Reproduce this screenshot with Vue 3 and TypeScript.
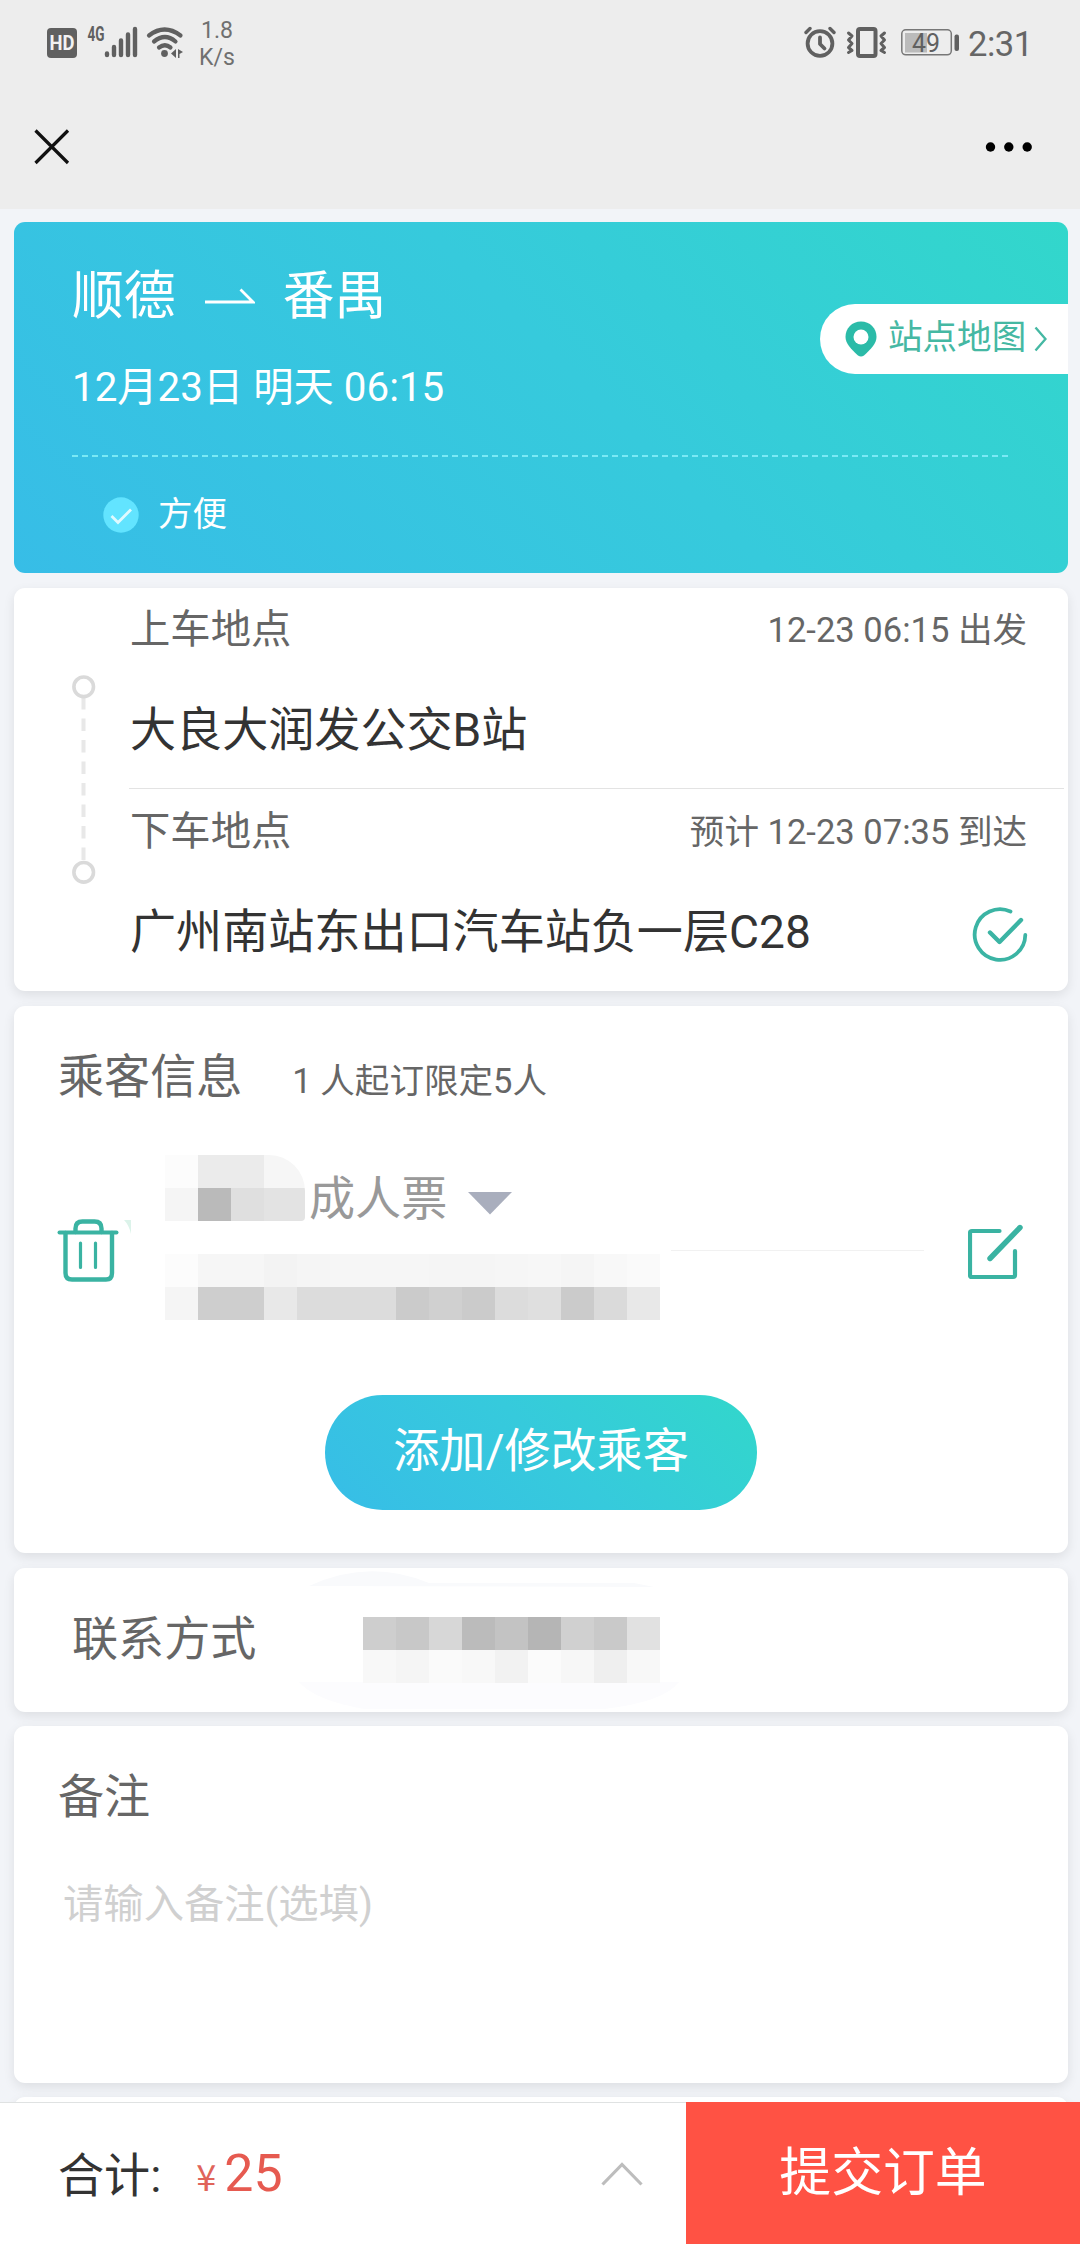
<script setup lang="ts">
interface Stop {
  label: string
  time: string
  name: string
  confirmed: boolean
}

const stops: Stop[] = [
  { label: '上车地点', time: '12-23 06:15 出发', name: '大良大润发公交B站', confirmed: false },
  { label: '下车地点', time: '预计 12-23 07:35 到达', name: '广州南站东出口汽车站负一层C28', confirmed: true },
]

const toCells = (row: string): string[] => row.split(' ').map((c) => '#' + c + c + c)

const nameMask: string[] = toCells('fc eb eb f6 f5 ba df e3')
const idMask: string[] = toCells(
  'fc f6 f6 f3 f5 f6 f6 f6 f5 f5 f6 f7 f5 f8 fa f5 ce ce e8 dc dc dc cb d0 cb dc df cb da e8',
)
const phoneMask: string[] = toCells('ce c8 d7 bb c3 b5 d0 c9 e1 f8 f5 fa f8 f2 fb f7 ef f8')
</script>

<template>
  <div class="screen">
    <header class="top">
      <div class="status">
        <svg class="net" width="140" height="60" viewBox="45 12 140 60">
          <rect x="47" y="28" width="30" height="30" rx="4" fill="#606060" />
          <text x="62" y="50" class="hd" text-anchor="middle" textLength="25" lengthAdjust="spacingAndGlyphs">HD</text>
          <text x="87.500" y="41" class="gen" textLength="17" lengthAdjust="spacingAndGlyphs">4G</text>
          <g stroke="#606060" stroke-width="4.400" stroke-linecap="round">
            <path d="M107 53.500v1.500M114 47v8M121 40.500v14.500M128 34.500v20.500M135 29v26" />
          </g>
          <g fill="none" stroke="#606060" stroke-width="4.200" stroke-linecap="round">
            <path d="M149 35.500q15.500-12 31.500 0M154 41.500q11-9 21.500 0M159 47.500q6-4.500 11.500 0" />
          </g>
          <circle cx="164.500" cy="53.500" r="3.400" fill="#606060" />
          <path d="M176 49v9l-5-4.500zM178 49v9h1.500v-4l3.500-2z" fill="#606060" />
        </svg>
        <div class="speed"><span>1.8</span><span>K/s</span></div>
        <div class="spring"></div>
        <svg width="156" height="60" viewBox="804 12 156 60">
          <g fill="none" stroke="#606060" stroke-linecap="round" stroke-linejoin="round">
            <circle cx="820" cy="43.500" r="12.400" stroke-width="3.800" />
            <path d="M820 37.500v6.500l4.500 4.500" stroke-width="3.800" />
            <path d="M806 32.500l4-4M834 32.500l-4-4" stroke-width="3.400" />
            <rect x="858" y="29" width="17.500" height="27" rx="2" stroke-width="4" />
            <path d="M848.500 33l3.500 3-3.500 4 3.500 3.500-3.500 4 3.500 3-3.500 2M884.500 33l-3.500 3 3.500 4-3.500 3.500 3.500 4-3.500 3 3.500 2" stroke-width="3" />
            <rect x="901.800" y="29.800" width="49.500" height="25" rx="4" stroke="#777" stroke-width="1.500" />
          </g>
          <rect x="905" y="33" width="22" height="19.500" fill="#bbb" />
          <rect x="954.500" y="34.500" width="4.500" height="16.500" rx="2" fill="#606060" />
          <text x="926" y="51.500" class="level" text-anchor="middle" textLength="28" lengthAdjust="spacingAndGlyphs">49</text>
        </svg>
        <span class="clock">2:31</span>
      </div>
      <div class="nav">
        <svg width="36" height="36" viewBox="0 0 36 36"><path d="M1.500 1.500l32.500 32.500M34 1.500l-32.500 32.500" stroke="#111" stroke-width="3.200" /></svg>
        <svg width="48" height="12" viewBox="0 0 48 12">
          <circle cx="5.500" cy="6" r="4.700" /><circle cx="23.800" cy="6" r="4.700" /><circle cx="42.200" cy="6" r="4.700" />
        </svg>
      </div>
    </header>

    <main class="cards">
      <section class="trip">
        <div class="route">
          <span>顺德</span>
          <svg width="50" height="18" viewBox="0 0 50 18"><path d="M0 14h48L35.500 1.500" fill="none" stroke="#fff" stroke-width="2.800" /></svg>
          <span>番禺</span>
        </div>
        <div class="date">12月23日 明天 06:15</div>
        <div class="rule"></div>
        <div class="tag">
          <svg width="36" height="36" viewBox="0 0 36 36">
            <circle cx="18" cy="18" r="17.700" fill="#62e4ff" />
            <path d="M8.500 19l6.500 6.500L28 12.500" fill="none" stroke="#dffaff" stroke-width="2.800" />
          </svg>
          <span>方便</span>
        </div>
        <div class="map">
          <svg width="32" height="36" viewBox="0 0 32 36">
            <path d="M16 0.500C7 0.500 0.500 7 0.500 16c0 6 5 11.500 12.500 18.500q3 2.200 6 0C26.500 27.500 31.500 22 31.500 16 31.500 7 25 0.500 16 0.500z" fill="#2bbba8" />
            <circle cx="16" cy="16" r="7.500" fill="#fff" />
          </svg>
          <span>站点地图</span>
          <svg width="13" height="26" viewBox="0 0 13 26"><path d="M1.500 1.500L11.500 13 1.500 24.500" fill="none" stroke="#45b8a3" stroke-width="2.400" /></svg>
        </div>
      </section>

      <section class="card stops">
        <svg class="rail" width="24" height="210" viewBox="0 0 24 210">
          <path d="M11.500 22v165" stroke="#e8e8e8" stroke-width="4" stroke-dasharray="12.500 9" />
          <circle cx="11.700" cy="11.800" r="9.800" fill="#fff" stroke="#dadada" stroke-width="3.600" />
          <circle cx="11.700" cy="197.300" r="9.800" fill="#fff" stroke="#dadada" stroke-width="3.600" />
        </svg>
        <div class="list">
          <div v-for="stop in stops" :key="stop.label" class="stop">
            <div class="head"><span class="label">{{ stop.label }}</span><span class="time">{{ stop.time }}</span></div>
            <div class="place">
              <span>{{ stop.name }}</span>
              <svg v-if="stop.confirmed" width="56" height="56" viewBox="0 0 56 56">
                <g fill="none" stroke="#3bb4a4" stroke-linecap="round" stroke-linejoin="round">
                  <path d="M38.500 4.500A25.300 25.300 0 1 0 53.300 28" stroke-width="3.800" />
                  <path d="M18 25.500l9.500 9.500L49 13" stroke-width="4.400" />
                </g>
              </svg>
            </div>
          </div>
        </div>
      </section>

      <section class="card passengers">
        <div class="title"><h2>乘客信息</h2><span>1 人起订限定5人</span></div>
        <div class="person">
          <svg class="trash" width="76" height="64" viewBox="0 0 76 64">
            <g fill="none" stroke="#3ab3a2" stroke-linecap="round">
              <path d="M2.500 13.500h57" stroke-width="4" />
              <path d="M18.500 13V9.500q0-7 7-7h12q7 0 7 7V13M8.500 14v40q0 6.500 6.500 6.500h34q6 0 6-6.500V14" stroke-width="4.400" />
              <path d="M23.500 24v24.500M38.500 24v24.500" stroke-width="3.200" />
            </g>
            <path d="M67 1h7v14q-2-9-7-14z" fill="#dcf3ea" />
          </svg>
          <div class="detail">
            <div class="fare">
              <div class="mask name"><i v-for="(c, n) in nameMask" :key="n" :style="{ background: c }"></i></div>
              <span>成人票</span>
              <svg width="44" height="23" viewBox="0 0 44 23"><path d="M0 0h44L22 22.500z" fill="#a9aebd" /></svg>
            </div>
            <div class="line"></div>
            <div class="mask id"><i v-for="(c, n) in idMask" :key="n" :style="{ background: c }"></i></div>
          </div>
          <svg class="edit" width="56" height="56" viewBox="0 0 56 56">
            <g fill="none" stroke="#3ab3a2" stroke-linecap="round" stroke-linejoin="round">
              <path d="M31.500 7H4q-2 0-2 2v42q0 2 2 2h41q2 0 2-2V27" stroke-width="4.200" />
              <path d="M22 34.500L52 3.500" stroke-width="5.400" />
            </g>
          </svg>
        </div>
        <button class="add">添加/修改乘客</button>
      </section>

      <section class="card contact">
        <svg class="haze" width="400" height="140" viewBox="0 0 400 140">
          <path d="M15 16Q75-12 135 13H340l20 4z" fill="#f9fafc" />
          <path d="M5 112h380q-15 20-75 27H70Q20 130 5 112z" fill="#fcfcfe" />
        </svg>
        <h2>联系方式</h2>
        <div class="mask phone"><i v-for="(c, n) in phoneMask" :key="n" :style="{ background: c }"></i></div>
      </section>

      <section class="card remark">
        <h2>备注</h2>
        <div class="hint">请输入备注(选填)</div>
      </section>
      <section class="card next"></section>
    </main>

    <footer class="bar">
      <div class="total">
        <span class="sum">合计:</span><span class="yen">¥</span><span class="price">25</span>
        <svg width="42" height="24" viewBox="0 0 42 24"><path d="M1.500 22.500L21 2.500l19.500 20" fill="none" stroke="#bdbdbd" stroke-width="3.200" /></svg>
      </div>
      <button class="submit">提交订单</button>
    </footer>
  </div>
</template>

<style>
body { margin: 0; }
</style>

<style scoped>
* { box-sizing: border-box; }
.screen {
  width: 1080px;
  height: 2244px;
  display: flex;
  flex-direction: column;
  overflow: hidden;
  background: #f2f4f8;
  font-family: Roboto, "Noto Sans CJK SC", sans-serif;
  color: #666;
}
svg { display: block; flex: none; }
span, h2 { white-space: nowrap; }
h2 { margin: 0; font-size: 46.08px; font-weight: 400; line-height: 60px; }
button { border: 0; padding: 0; font-family: inherit; color: #fff; }
.top { height: 209px; flex: none; background: #ededed; }
.status { height: 84px; display: flex; align-items: center; padding: 0 48px 0 45px; }
.hd { font: 700 20px Roboto, sans-serif; fill: #f2f2f2; }
.gen { font: 700 20px Roboto, sans-serif; fill: #606060; }
.level { font: 400 25px Roboto, sans-serif; fill: #606060; }
.speed { margin-left: 14px; width: 36px; display: flex; flex-direction: column; align-items: center; font-size: 23px; line-height: 27px; color: #707070; padding-top: 4px; }
.spring { flex: 1; }
.clock { margin-left: 8px; width: 64px; font-size: 34.56px; letter-spacing: -0.5px; line-height: 40px; padding-top: 3px; }
.nav { height: 125px; display: flex; justify-content: space-between; align-items: flex-start; padding: 45px 47px 0 34px; }
.nav svg:last-child { margin-top: 12px; }

.cards { flex: 1; min-height: 0; padding: 13px 12px 0 14px; display: flex; flex-direction: column; overflow: hidden; }
.card { flex: none; background: #fff; border-radius: 11px; box-shadow: 0 4px 12px rgba(0, 0, 0, 0.09); }
.trip { flex: none; position: relative; height: 351px; margin-bottom: 15px; padding: 45px 56px 0 58px; border-radius: 11px; color: #fff; background: linear-gradient(45deg, #37bde7, #36cadc 54%, #32d7cb); }
.route { display: flex; align-items: center; height: 60px; font-size: 51.84px; line-height: 60px; }
.route svg { margin: -1px 28px 0 29px; }
.date { margin-top: 34px; height: 54px; font-size: 40.32px; line-height: 54px; }
.rule { margin-top: 40px; height: 2px; background: repeating-linear-gradient(90deg, #7ae9f5 0 6px, transparent 6px 10px); }
.tag { display: flex; align-items: center; margin: 33px 0 0 31px; height: 50px; font-size: 34.56px; }
.tag span { margin: -3px 0 0 19px; line-height: 50px; }
.map { position: absolute; right: 0; top: 82px; width: 248px; height: 70px; padding-left: 25px; display: flex; align-items: center; background: #fff; border-radius: 35px 0 0 35px; color: #45b8a3; font-size: 34.56px; }
.map span { margin: -4px 8px 0 11px; line-height: 50px; }

.stops { height: 403px; margin-bottom: 15px; display: flex; }
.rail { margin: 87px 33px 0 58px; }
.list { flex: 1; }
.stop { padding-right: 41px; }
.stop:first-child { background: linear-gradient(#e3e3e3, #e3e3e3) 0 200px / 935px 1px no-repeat; }
.head { height: 82px; display: flex; align-items: center; justify-content: space-between; }
.label { font-size: 40.32px; margin: -7px 0 0 1px; }
.time { font-size: 34.56px; margin-top: -4px; }
.place { height: 120px; display: flex; align-items: center; justify-content: space-between; font-size: 46.08px; color: #333; }
.place span { margin: -8px 0 0 1px; }
.place svg { margin: 5px -1px 0 0; }

.passengers { height: 547px; margin-bottom: 15px; padding-top: 41px; }
.title { height: 60px; display: flex; align-items: center; padding-left: 44px; }
.title span { margin: 2px 0 0 50px; font-size: 34.56px; }
.person { display: flex; height: 245px; padding-top: 48px; }
.trash { margin: 64px 0 0 43px; }
.detail { margin-left: 32px; width: 760px; }
.mask { display: grid; grid-auto-rows: 33px; overflow: hidden; }
.name { grid-template-columns: 33px 33px 33px 41px; height: 66px; border-radius: 0 36px 4px 0; }
.id { width: 495px; grid-template-columns: repeat(15, 33px); margin-top: 3px; }
.phone { width: 297px; grid-template-columns: repeat(9, 33px); margin: 0 0 0 107px; }
.fare { height: 66px; display: flex; align-items: center; color: #999; font-size: 46.08px; }
.fare span { margin: 14px 21px 0 4px; }
.fare svg { margin-top: 31px; }
.line { margin: 29px 0 0 506px; width: 253px; height: 1px; background: #f1f1f1; }
.edit { margin: 69px 0 0 43px; }
.add { display: block; margin: 43px 0 0 311px; width: 432px; height: 115px; padding-bottom: 12px; border-radius: 58px; font-size: 46.08px; background: linear-gradient(45deg, #37bde7, #36cadc 52%, #32d7cb); }

.contact { position: relative; height: 144px; margin-bottom: 14px; padding: 41px 0 0 58px; display: flex; align-items: flex-start; }
.contact .haze { position: absolute; left: 280px; top: 2px; }
.contact h2, .contact .mask { position: relative; }
.contact .mask { margin-top: 8px; }
.remark { height: 357px; margin-bottom: 14px; padding: 41px 44px 0; }
.hint { margin: 49px 0 0 5px; font-size: 40.32px; line-height: 58px; color: #d0d0d0; }
.next { height: 60px; }

.bar { flex: none; height: 142px; display: flex; }
.total { width: 686px; display: flex; align-items: center; padding: 0 43px 0 58px; background: #fff; border-top: 1px solid #dfe2e2; }
.total svg { margin-left: auto; margin-top: 1px; }
.sum { margin-top: -3px; font-size: 46.08px; color: #333; }
.yen { margin: 3px 0 0 35px; font-family: "Noto Sans CJK SC", sans-serif; font-size: 36px; line-height: 50px; color: #e0645a; }
.price { margin-left: 8px; font-size: 51.84px; color: #e65a50; }
.submit { flex: 1; padding-bottom: 9px; background: #ff5244; font-size: 51.84px; }
</style>
